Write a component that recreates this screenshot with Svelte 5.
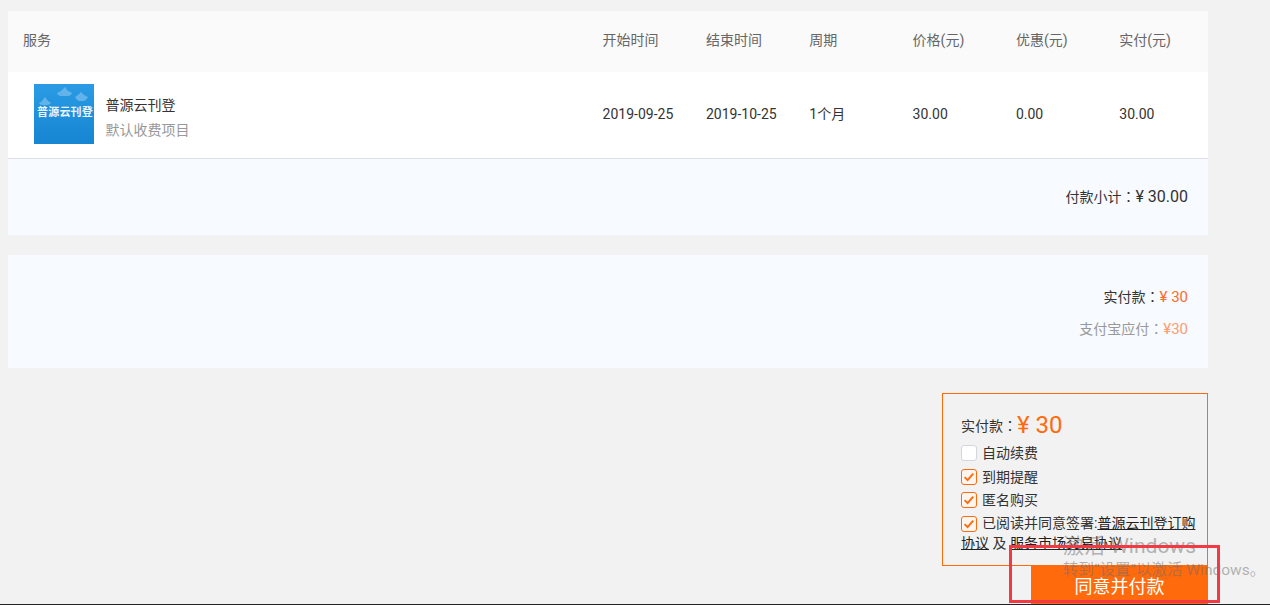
<script>
  const headers = ['开始时间', '结束时间', '周期', '价格(元)', '优惠(元)', '实付(元)'];
  const values = ['2019-09-25', '2019-10-25', '1个月', '30.00', '0.00', '30.00'];
</script>

{#snippet check(on)}
  <span class="box" class:on>
    {#if on}
      <svg viewBox="0 0 16 16" width="14" height="14" aria-hidden="true">
        <path d="M3 8.2 L6.4 11.6 L12.8 4.2" fill="none" stroke="#ff6a0c" stroke-width="2.2" />
      </svg>
    {/if}
  </span>
{/snippet}

<div class="page">
  <section class="order">
    <div class="row head">
      <div class="service-head">服务</div>
      {#each headers as h}<div class="cell">{h}</div>{/each}
    </div>
    <div class="row body">
      <div class="service">
        <div class="thumb">
          <svg viewBox="0 0 60 60" width="60" height="60" aria-hidden="true">
            <path d="M5 19 Q7 18 8 17 L11 13 L14 17 Q16 18 17 19 Q16 21 13 21 L8 21 Q6 21 5 19 Z M23 9 Q25 8 27 7 L31 3 L34 7 Q37 8 38 9 Q37 12 34 12 L27 12 Q24 12 23 9 Z M41 13 Q43 12 44 11 L47 8 L50 11 Q52 12 54 13 Q52 17 49 17 L46 17 Q43 17 41 13 Z" fill="#62b3ea" />
          </svg>
          <span>普源云刊登</span>
        </div>
        <div class="names">
          <div class="name">普源云刊登</div>
          <div class="desc">默认收费项目</div>
        </div>
      </div>
      {#each values as v}<div class="cell">{v}</div>{/each}
    </div>
    <div class="subtotal">付款小计<span class="colon">：</span><span class="num">¥ 30.00</span></div>
  </section>

  <section class="summary">
    <div class="line">实付款<span class="colon">：</span><span class="orange">¥ 30</span></div>
    <div class="line muted">支付宝应付<span class="colon">：</span><span class="light">¥30</span></div>
  </section>

  <section class="panel">
    <div class="total">实付款<span class="colon">：</span><span class="big">¥ 30</span></div>
    <div class="opt">{@render check(false)}自动续费</div>
    <div class="opt">{@render check(true)}到期提醒</div>
    <div class="opt">{@render check(true)}匿名购买</div>
    <div class="agree">{@render check(true)}已阅读并同意签署:<u>普源云刊登订购协议</u> 及 <u>服务市场交易协议</u></div>
  </section>
  <button class="pay">同意并付款</button>

  <div class="watermark">
    <div class="w1">激活 Windows</div>
    <div class="w2">转到“设置”以激活 Windows。</div>
  </div>
  <div class="redbox"></div>
</div>

<style>
  :global(body) {
    margin: 0;
    background: #f2f2f2;
    overflow: hidden;
  }
  .page {
    position: relative;
    box-sizing: border-box;
    width: 1270px;
    height: 605px;
    padding: 11px 0 0 8px;
    overflow: hidden;
    border-bottom: 1px solid #222;
    font: 14px/20px Roboto, "Noto Sans CJK SC", sans-serif;
    color: #333;
  }
  .order, .summary { width: 1200px; }
  .row {
    display: grid;
    grid-template-columns: 580px repeat(6, 1fr);
    align-items: center;
  }
  .cell { padding-left: 15px; margin-left: -0.4px; }
  .head {
    height: 61px;
    padding-bottom: 3px;
    box-sizing: border-box;
    background: #fafafa;
    color: #666;
  }
  .service-head { padding-left: 15px; }
  .body {
    height: 87px;
    box-sizing: border-box;
    padding-bottom: 2px;
    background: #fff;
    border-bottom: 1px solid #dcdfe6;
  }
  .service {
    display: flex;
    align-items: center;
    gap: 12px;
    padding: 0 0 0 26px;
  }
  .thumb {
    position: relative;
    width: 60px;
    height: 60px;
    background: linear-gradient(#2a9be4, #1685d2);
  }
  .thumb svg { display: block; }
  .thumb span {
    position: absolute;
    left: 3px;
    top: 19px;
    font-size: 11px;
    letter-spacing: 0.2px;
    line-height: 20px;
    font-weight: 700;
    color: #e6f4ff;
    white-space: nowrap;
  }
  .names { margin-top: 7px; margin-left: -0.5px; }
  .name { color: #333; line-height: 25px; }
  .desc { color: #999; line-height: 25px; }
  .colon { font-family: "Noto Sans CJK TC", sans-serif; font-size: 14px; }
  .subtotal {
    box-sizing: border-box;
    height: 76px;
    padding: 26px 20px 0 0;
    background: #f7faff;
    text-align: right;
    line-height: 22px;
  }
  .subtotal .num { font-size: 16px; }
  .summary {
    box-sizing: border-box;
    height: 113px;
    margin-top: 20px;
    padding: 25px 20px 0 0;
    background: #f7faff;
    text-align: right;
  }
  .line { height: 32px; line-height: 32px; }
  .line .orange, .line .light { font-size: 15px; }
  .orange { color: #ff6a2a; }
  .muted { color: #999; }
  .light { color: #ff9c6e; }
  .panel {
    box-sizing: border-box;
    width: 266px;
    height: 173px;
    margin: 25px 0 0 934px;
    padding: 15px 10px 0 18px;
    border: 1px solid #ff6a0c;
  }
  .total {
    height: 32px;
    line-height: 32px;
    white-space: nowrap;
  }
  .big {
    font-size: 24px;
    color: #ff6a0c;
    vertical-align: -2px;
  }
  .opt {
    display: flex;
    align-items: center;
    height: 23.7px;
  }
  .box {
    box-sizing: border-box;
    flex: none;
    display: inline-flex;
    align-items: center;
    justify-content: center;
    width: 16px;
    height: 16px;
    margin-right: 5px;
    border: 1px solid #d5d5de;
    border-radius: 3px;
    background: #fff;
  }
  .box.on {
    border-color: #ff6a0c;
    background: #fff5ee;
  }
  .agree { line-height: 20px; margin-top: 1px; }
  .agree .box { vertical-align: -3px; }
  .agree u { color: #222; }
  .pay {
    display: block;
    width: 177px;
    height: 38px;
    margin: 0 0 0 1023px;
    padding: 0;
    border: 0;
    background: #ff6a0c;
    color: #fff;
    font: 18px/42px Roboto, "Noto Sans CJK SC", sans-serif;
    text-align: center;
  }
  .watermark {
    position: absolute;
    left: 1063px;
    top: 532px;
    color: rgba(110, 110, 110, 0.5);
    white-space: nowrap;
    pointer-events: none;
  }
  .w1 { font-size: 21px; line-height: 28px; }
  .w2 { font-size: 15.5px; line-height: 20px; margin-top: 0; }
  .redbox {
    position: absolute;
    left: 1009px;
    top: 545px;
    width: 211px;
    height: 58px;
    box-sizing: border-box;
    border: 3px solid #f23a44;
    pointer-events: none;
  }
</style>
